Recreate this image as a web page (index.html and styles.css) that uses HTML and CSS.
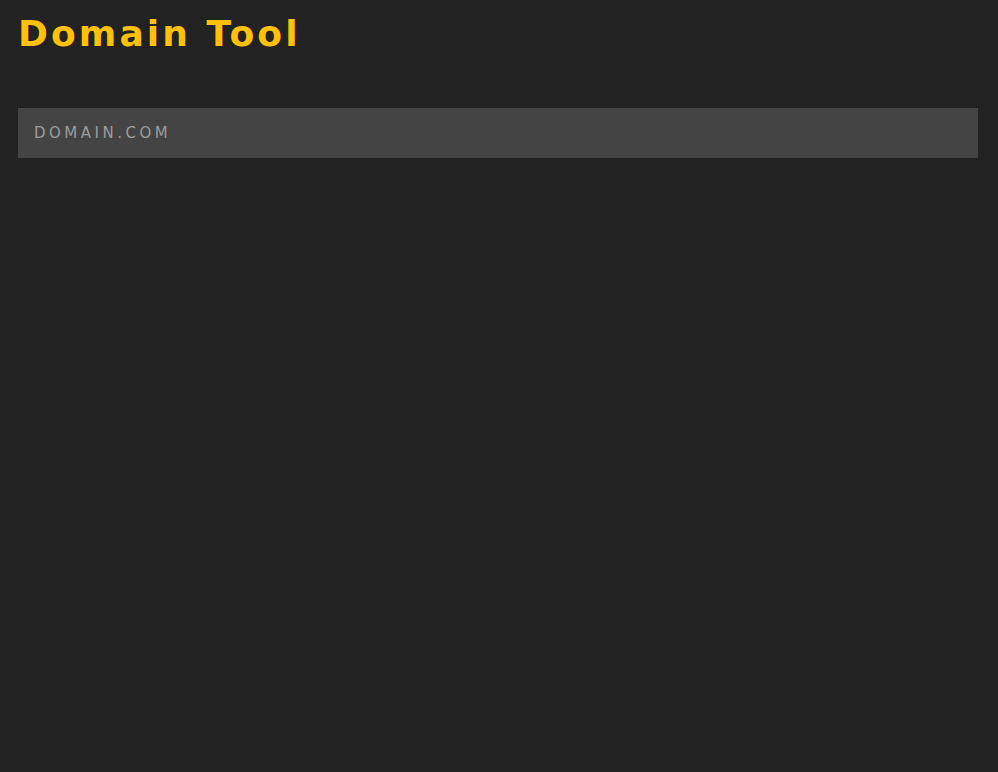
FILE: index.html
```html
<!DOCTYPE html>
<html>
<head>
<meta charset="utf-8">
<link rel="stylesheet" href="styles.css">
</head>
<body>
<div class="app">
  <h1 class="title">Domain Tool</h1>
  <input class="domain-input" type="text" placeholder="DOMAIN.COM">
</div>
</body>
</html>
```
FILE: styles.css
```css
html, body {
  margin: 0;
  padding: 0;
  background: #222222;
  height: 100%;
}
.app {
  padding: 0 20px 0 18px;
  display: flex;
  flex-direction: column;
}
.title {
  margin: 12px 0 0 0;
  font-family: "DejaVu Sans", sans-serif;
  font-weight: bold;
  font-size: 36px;
  line-height: 44px;
  letter-spacing: 3.1px;
  color: #ffc107;
}
.domain-input {
  margin-top: 52px;
  height: 50px;
  box-sizing: border-box;
  border: none;
  outline: none;
  background: #444444;
  padding: 0 16px;
  font-family: "DejaVu Sans", sans-serif;
  font-size: 15px;
  letter-spacing: 3.5px;
  color: #cccccc;
}
.domain-input::placeholder {
  color: #9c9c9c;
}
```
